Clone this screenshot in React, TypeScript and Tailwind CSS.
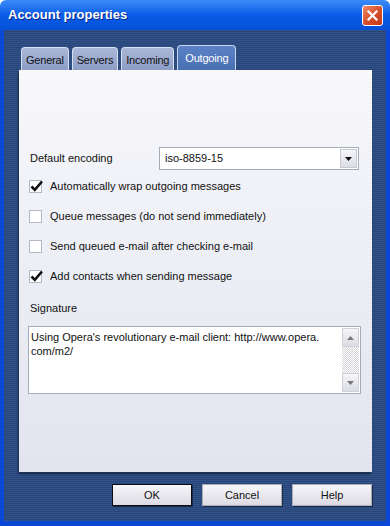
import React from "react";

const font = { fontFamily: '"Liberation Sans", Arial, sans-serif' };

function CheckRow({ checked, label }: { checked: boolean; label: string }) {
   return (
      <div className="flex h-[30px] items-center">
         <div className="relative h-[13px] w-[13px] border border-[#b4b8c4] bg-white">
            {checked && (
               <svg width="14" height="14" viewBox="0 0 14 14" className="absolute -top-[2px] left-0">
                  <path d="M1.5 7.5 L4.8 10.8 L12 2.5" fill="none" stroke="#111" strokeWidth="2.6" />
               </svg>
            )}
         </div>
         <span className="ml-[8px] text-[11px] text-[#111]">{label}</span>
      </div>
   );
}

function Tab({ label, active }: { label: string; active?: boolean }) {
   if (active) {
      return (
         <div className="flex h-[25px] items-start rounded-t-[4px] border border-b-0 border-[#c9d6ef] bg-gradient-to-b from-[#5b82c6] to-[#4a70b4] px-[7px] pt-[4px] text-[11px] tracking-[-0.2px] text-white">
            {label}
         </div>
      );
   }
   return (
      <div className="flex h-[23px] items-center rounded-t-[4px] border border-b-0 border-[#d6def0] bg-gradient-to-b from-[#aab7d8] to-[#8c9dc6] px-[4px] pt-[2px] text-[11px] tracking-[-0.2px] text-[#111]">
         {label}
      </div>
   );
}

function Button({ label, def }: { label: string; def?: boolean }) {
   return (
      <div
         className={
            "flex h-[22px] w-[80px] items-center justify-center bg-gradient-to-b from-[#f7f6fa] to-[#dcdbe4] text-[11px] text-[#111] shadow-[1px_1px_0_#1c2c4c] " +
            (def ? "border border-[#0c0c10]" : "border border-[#a9abb8]")
         }
      >
         {label}
      </div>
   );
}

export default function App() {
   return (
      <div className="flex h-[526px] w-[390px] flex-col overflow-hidden bg-white" style={font}>
         <div className="flex h-[30px] items-center justify-between rounded-t-[6px] bg-gradient-to-b from-[#3b8cf6] via-[#0a5ce8] to-[#0650d8] pl-[8px] pr-[7px]">
            <span className="text-[13px] font-bold text-white [text-shadow:1px_1px_0_#0a2a8a]">
               Account properties
            </span>
            <div className="flex h-[21px] w-[21px] items-center justify-center rounded-[3px] border border-white bg-gradient-to-br from-[#ee8a68] via-[#d9502c] to-[#c0381a]">
               <svg width="13" height="13" viewBox="0 0 13 13">
                  <path d="M2.5 2.5 L10.5 10.5 M10.5 2.5 L2.5 10.5" stroke="#fff" strokeWidth="2.2" strokeLinecap="square" />
               </svg>
            </div>
         </div>
         <div className="flex flex-1 flex-col border-x-[4px] border-b-[5px] border-x-[#0a47d6] border-b-[#0a47d6] bg-[#2c4a80] bg-[repeating-linear-gradient(to_bottom,#32528c_0px,#32528c_1px,#284576_1px,#284576_2px)] px-[15px] pt-[15px]">
            <div className="ml-[2px] flex items-end gap-[3px]">
               <Tab label="General" />
               <Tab label="Servers" />
               <Tab label="Incoming" />
               <Tab label="Outgoing" active />
            </div>
            <div className="h-[402px] w-[353px] bg-gradient-to-b from-[#f8f8fb] via-[#eceef5] to-[#e2e5ef] px-[10px] pt-[77px] shadow-[-1px_2px_2px_rgba(0,0,0,0.45)]">
               <div className="flex h-[23px] items-center">
                  <span className="w-[130px] pl-[1px] text-[11px] text-[#111]">Default encoding</span>
                  <div className="flex h-[23px] w-[200px] items-center justify-between border border-[#a6abb8] bg-white pl-[5px] pr-[1px]">
                     <span className="text-[11px] text-[#111]">iso-8859-15</span>
                     <div className="flex h-[19px] w-[17px] items-center justify-center border border-[#c6c8d2] bg-gradient-to-b from-[#f6f6f8] to-[#dcdde4]">
                        <svg width="7" height="4" viewBox="0 0 7 4">
                           <path d="M0 0 H7 L3.5 4 Z" fill="#111" />
                        </svg>
                     </div>
                  </div>
               </div>
               <div className="mt-[1px]">
                  <CheckRow checked label="Automatically wrap outgoing messages" />
                  <CheckRow checked={false} label="Queue messages (do not send immediately)" />
                  <CheckRow checked={false} label="Send queued e-mail after checking e-mail" />
                  <CheckRow checked label="Add contacts when sending message" />
               </div>
               <div className="mt-[9px] pl-[1px] text-[11px] leading-[16px] text-[#111]">Signature</div>
               <div className="-ml-[1px] mt-[10px] flex h-[68px] w-[333px] border border-[#a6abb8] bg-white">
                  <div className="flex-1 px-[2px] pt-[3px] text-[11px] leading-[14px] text-[#111]">
                     Using Opera's revolutionary e-mail client: http://www.opera.
                     <br />
                     com/m2/
                  </div>
                  <div className="my-[1px] mr-[1px] flex w-[17px] flex-col bg-[repeating-conic-gradient(#d4d4d8_0%_25%,#ffffff_0%_50%)] bg-[length:2px_2px]">
                     <div className="flex h-[19px] items-center justify-center border border-[#d0d2da] bg-gradient-to-b from-[#f6f6f8] to-[#dcdde4]">
                        <svg width="7" height="4" viewBox="0 0 7 4">
                           <path d="M0 4 H7 L3.5 0 Z" fill="#777" />
                        </svg>
                     </div>
                     <div className="flex-1" />
                     <div className="flex h-[19px] items-center justify-center border border-[#d0d2da] bg-gradient-to-b from-[#f6f6f8] to-[#dcdde4]">
                        <svg width="7" height="4" viewBox="0 0 7 4">
                           <path d="M0 0 H7 L3.5 4 Z" fill="#777" />
                        </svg>
                     </div>
                  </div>
               </div>
            </div>
            <div className="mt-[12px] flex w-[353px] justify-end gap-[10px]">
               <Button label="OK" def />
               <Button label="Cancel" />
               <Button label="Help" />
            </div>
         </div>
      </div>
   );
}
